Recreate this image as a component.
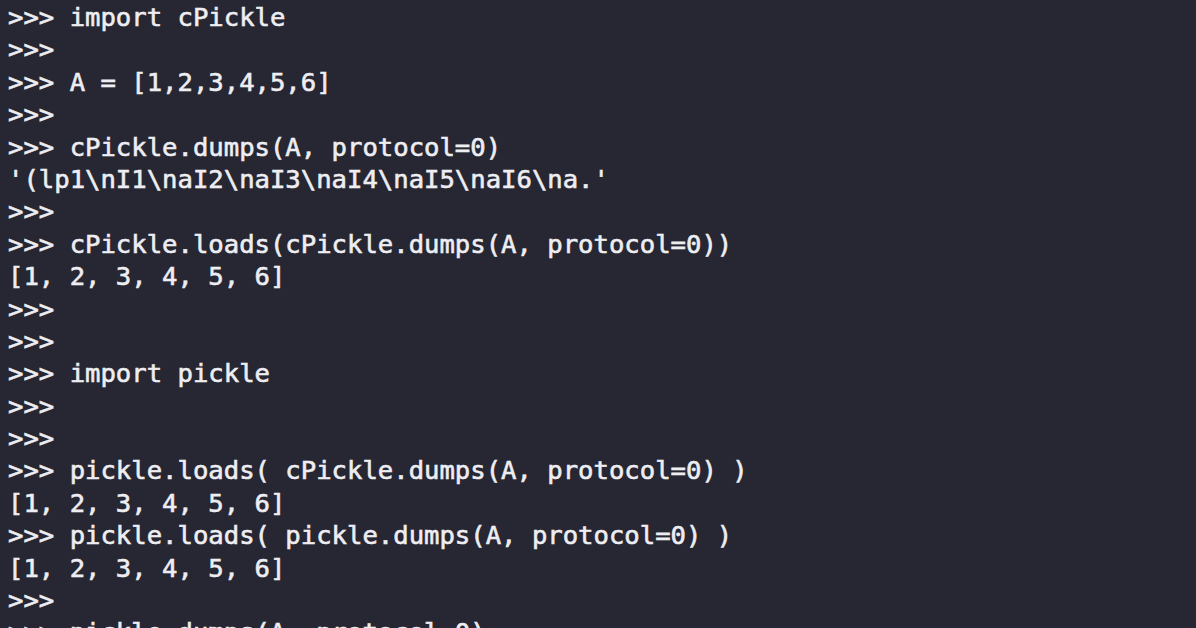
export default function App() {
  const lines = [
    ">>> import cPickle",
    ">>>",
    ">>> A = [1,2,3,4,5,6]",
    ">>>",
    ">>> cPickle.dumps(A, protocol=0)",
    "'(lp1\\nI1\\naI2\\naI3\\naI4\\naI5\\naI6\\na.'",
    ">>>",
    ">>> cPickle.loads(cPickle.dumps(A, protocol=0))",
    "[1, 2, 3, 4, 5, 6]",
    ">>>",
    ">>>",
    ">>> import pickle",
    ">>>",
    ">>>",
    ">>> pickle.loads( cPickle.dumps(A, protocol=0) )",
    "[1, 2, 3, 4, 5, 6]",
    ">>> pickle.loads( pickle.dumps(A, protocol=0) )",
    "[1, 2, 3, 4, 5, 6]",
    ">>>",
    ">>> pickle.dumps(A, protocol=0)",
  ];
  return (
    <div className="w-[1196px] h-[628px] overflow-hidden bg-[#272733]">
      <div
        className="pl-[8px] pt-[1px] text-[25.6px] leading-[32.4px] text-[#eeeef2] whitespace-pre [-webkit-text-stroke:0.6px_#eeeef2]"
        style={{ fontFamily: '"DejaVu Sans Mono", "Liberation Mono", monospace' }}
      >
        {lines.map((l, i) => (
          <div key={i} className="h-[32.4px]">{l}</div>
        ))}
      </div>
    </div>
  );
}
